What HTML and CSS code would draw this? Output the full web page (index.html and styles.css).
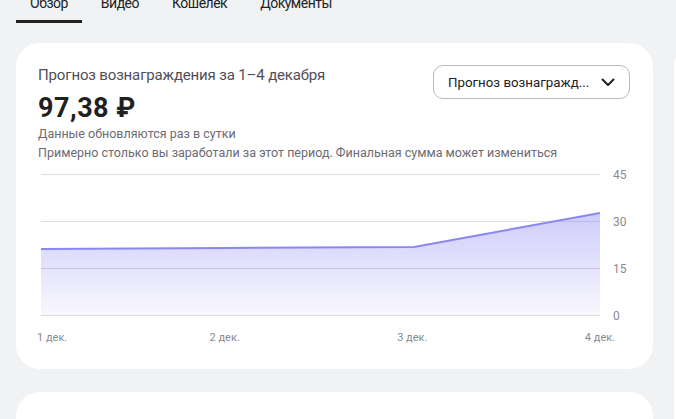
FILE: index.html
```html
<!DOCTYPE html>
<html lang="ru">
<head>
    <meta charset="UTF-8">
    <meta name="viewport" content="width=device-width, initial-scale=1.0">
    <title>Студия — Обзор</title>
    <link rel="stylesheet" href="styles.css">
</head>
<body>

<div class="page">
    <div class="main">
        <div class="tabs">
            <div class="tab active">Обзор</div>
            <div class="tab">Видео</div>
            <div class="tab">Кошелек</div>
            <div class="tab">Документы</div>
        </div>

        <div class="card">
            <div class="card-head">
                <div class="card-info">
                    <div class="card-title">Прогноз вознаграждения за 1–4 декабря</div>
                    <div class="amount">97,38 ₽</div>
                    <div class="note">Данные обновляются раз в сутки</div>
                    <div class="note">Примерно столько вы заработали за этот период. Финальная сумма может измениться</div>
                </div>
                <div class="select">
                    <span>Прогноз вознагражд...</span>
                    <svg width="14" height="14" viewBox="0 0 14 14"><path d="M1.5 4.5 L7 10 L12.5 4.5" fill="none" stroke="#222" stroke-width="2" stroke-linecap="round" stroke-linejoin="round"/></svg>
                </div>
            </div>

            <div class="chart">
                <svg class="plot" width="559" height="142" viewBox="0 0 559 142">
                    <defs>
                        <linearGradient id="fill" x1="0" y1="0" x2="0" y2="1">
                            <stop offset="0" stop-color="#8a85f2" stop-opacity="0.42"/>
                            <stop offset="1" stop-color="#8a85f2" stop-opacity="0.06"/>
                        </linearGradient>
                    </defs>
                    <line x1="0" y1="0.5" x2="559" y2="0.5" stroke="#dcdce2"/>
                    <line x1="0" y1="47.5" x2="559" y2="47.5" stroke="#dcdce2"/>
                    <line x1="0" y1="94.5" x2="559" y2="94.5" stroke="#d6d6e0"/>
                    <path d="M0 75 L186 74 L373 73 L559 39 L559 141 L0 141 Z" fill="url(#fill)"/>
                    <line x1="0" y1="141.5" x2="559" y2="141.5" stroke="#d8d8de"/>
                    <path d="M0 75 L186 74 L373 73 L559 39" fill="none" stroke="#8a86f2" stroke-width="2"/>
                </svg>
                <div class="y-axis">
                    <span>45</span>
                    <span>30</span>
                    <span>15</span>
                    <span>0</span>
                </div>
                <div class="x-axis">
                    <div class="tick first"><span>1 дек.</span></div>
                    <div class="tick"><span>2 дек.</span></div>
                    <div class="tick"><span>3 дек.</span></div>
                    <div class="tick"><span>4 дек.</span></div>
                </div>
            </div>
        </div>

        <div class="card">
            <div class="section-title">Статистика публикаций</div>
        </div>
    </div>

    <div class="side">
        <div class="card side-card"></div>
    </div>
</div>

</body>
</html>
```

FILE: styles.css
```css
body {
    font-family: Roboto, "Liberation Sans", Arial, sans-serif;
    margin: 0;
    padding: 0;
    background-color: #f1f2f4;
    color: #222;
    overflow: hidden;
}
.page {
    display: flex;
    gap: 21px;
    padding: 0 16px;
}
.main {
    width: 637px;
    flex-shrink: 0;
}
.side {
    width: 300px;
    flex-shrink: 0;
    padding-top: 43px;
}
.tabs {
    display: flex;
    gap: 5px;
    margin-top: -7px;
    margin-bottom: 20px;
}
.tab {
    font-size: 14px;
    line-height: 20px;
    padding: 0 14px 7px;
    border-bottom: 3px solid transparent;
    color: #222;
    letter-spacing: -0.5px;
}
.tab.active {
    border-bottom-color: #222;
}
.card {
    background-color: white;
    border-radius: 24px;
    padding: 22px 23px 24px 22px;
    margin-bottom: 23px;
}
.side-card {
    height: 600px;
}
.card-head {
    display: flex;
    justify-content: space-between;
    align-items: flex-start;
}
.card-info {
    flex: 1;
    min-width: 0;
    white-space: nowrap;
}
.card-title {
    font-size: 15px;
    line-height: 20px;
    color: #4f4f57;
    letter-spacing: -0.15px;
}
.amount {
    font-size: 27px;
    line-height: 32px;
    font-weight: 700;
    color: #1f1f24;
    margin-top: 7px;
    letter-spacing: 0.5px;
}
.note {
    font-size: 12.5px;
    line-height: 19px;
    color: #6b6b73;
}
.select {
    flex-shrink: 0;
    width: 197px;
    height: 34px;
    box-sizing: border-box;
    border: 1px solid #b9bac2;
    border-radius: 10px;
    display: flex;
    align-items: center;
    justify-content: space-between;
    padding: 0 14px 0 14px;
    font-size: 13.3px;
    color: #222;
    white-space: nowrap;
}
.select svg {
    display: block;
}
.chart {
    display: grid;
    grid-template-columns: 559px auto;
    column-gap: 13px;
    margin: 12px 0 0 3px;
}
.plot {
    display: block;
}
.y-axis {
    display: flex;
    flex-direction: column;
    justify-content: space-between;
    font-size: 12px;
    color: #8a8a92;
    padding: 1px 0 0;
}
.y-axis span {
    height: 0;
    line-height: 0;
}
.x-axis {
    display: flex;
    justify-content: space-between;
    width: 559px;
    margin-top: 15px;
    font-size: 11px;
    line-height: 14px;
    color: #8a8a92;
}
.tick {
    width: 0;
    display: flex;
    justify-content: center;
    white-space: nowrap;
}
.tick.first {
    justify-content: flex-start;
    margin-left: -4px;
}
.section-title {
    font-size: 18px;
    font-weight: 700;
    line-height: 24px;
    margin-top: 3px;
}
```
